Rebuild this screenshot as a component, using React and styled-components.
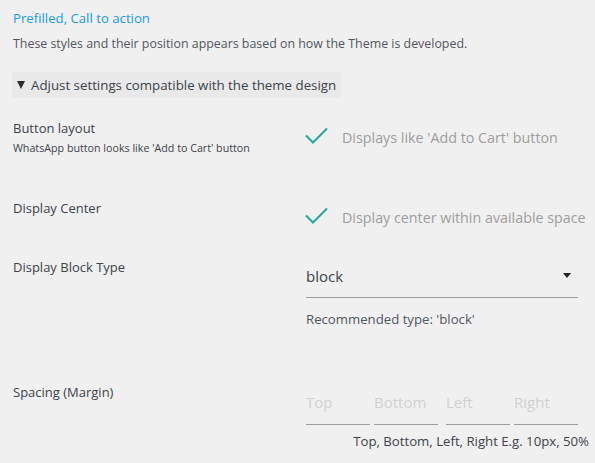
import React from 'react'
import styled, { createGlobalStyle } from 'styled-components'

const Global = createGlobalStyle`
  html, body {
    margin: 0;
    background: #f0f0f0;
  }
  body {
    font-family: "Open Sans", "Noto Sans", sans-serif;
    color: #3c434a;
  }
`

const Check = ({ label }) => {
  return (
    <CheckRow>
      <svg width="26" height="22" viewBox="0 0 26 22">
        <path d="M3 9.5 L10 16.5 L24 2.5" fill="none" stroke="#26a69a" strokeWidth="2" />
      </svg>
      <span>{label}</span>
    </CheckRow>
  )
}

const App = () => {
  const margins = ['Top', 'Bottom', 'Left', 'Right']
  return (
    <Page>
      <Global />
      <Title>Prefilled, Call to action</Title>
      <Desc>These styles and their position appears based on how the Theme is developed.</Desc>

      <Summary>
        <Arrow /> Adjust settings compatible with the theme design
      </Summary>

      <Row $h={80}>
        <div>
          <Label>Button layout</Label>
          <Sub>WhatsApp button looks like 'Add to Cart' button</Sub>
        </div>
        <Check label="Displays like 'Add to Cart' button" />
      </Row>

      <Row $h={59}>
        <Label>Display Center</Label>
        <Check label="Display center within available space" />
      </Row>

      <Row $h={125}>
        <Label>Display Block Type</Label>
        <div>
          <Select>
            <span>block</span>
            <Caret />
          </Select>
          <Hint>Recommended type: 'block'</Hint>
        </div>
      </Row>

      <Row $h={80}>
        <Label>Spacing (Margin)</Label>
        <div>
          <MarginInputs>
            {margins.map((m) => (
              <MarginField key={m} $wide={m === 'Left'}>{m}</MarginField>
            ))}
          </MarginInputs>
          <MarginHint>Top, Bottom, Left, Right E.g. 10px, 50%</MarginHint>
        </div>
      </Row>
    </Page>
  )
}

const Page = styled.div`
  padding: 8px 0 0 13px;
  width: 582px;
  box-sizing: border-box;
`

const Title = styled.div`
  color: #1a9be6;
  font-size: 13.2px;
  line-height: 20px;
`

const Desc = styled.p`
  margin: 6px 0 0;
  font-size: 12.4px;
  line-height: 20px;
  color: #50575e;
`

const Summary = styled.div`
  display: flex;
  align-items: center;
  width: fit-content;
  margin: 18px 0 21px -1px;
  padding: 4px 5px 4px 4px;
  background: #e9e9e9;
  font-size: 13.3px;
  line-height: 18px;
  color: #3c434a;
`

const Arrow = styled.span`
  width: 0;
  height: 0;
  margin: 0 6px 0 1px;
  border-left: 4.5px solid transparent;
  border-right: 4.5px solid transparent;
  border-top: 8px solid #2c2c2c;
`

const Row = styled.div`
  display: grid;
  grid-template-columns: 293px 1fr;
  height: ${(p) => p.$h}px;
`

const Label = styled.div`
  font-size: 13px;
  line-height: 18px;
  color: #3c434a;
`

const Sub = styled.div`
  margin-top: 4px;
  font-size: 10.7px;
  line-height: 14px;
  color: #3c434a;
`

const CheckRow = styled.label`
  display: flex;
  align-items: center;
  margin-top: 6px;
  height: 24px;
  font-size: 14.3px;
  color: #9e9e9e;
  white-space: nowrap;

  svg {
    flex-shrink: 0;
    margin-left: -3px;
    margin-right: 13px;
  }
`

const Select = styled.div`
  display: flex;
  align-items: center;
  justify-content: space-between;
  width: 272px;
  height: 40px;
  padding-bottom: 4px;
  box-sizing: border-box;
  border-bottom: 1px solid #9e9e9e;
  font-size: 15px;
  line-height: 18px;
  color: #3c434a;
`

const Caret = styled.span`
  width: 0;
  height: 0;
  margin-right: 7px;
  border-left: 4.5px solid transparent;
  border-right: 4.5px solid transparent;
  border-top: 5px solid #222;
`

const Hint = styled.div`
  margin-top: 12px;
  font-size: 13.2px;
  color: #50575e;
`

const MarginInputs = styled.div`
  display: flex;
  gap: 4px;
  margin-top: 5px;
`

const MarginField = styled.div`
  width: 64px;
  height: 36px;
  margin-left: ${(p) => (p.$wide ? 4 : 0)}px;
  border-bottom: 1px solid #9e9e9e;
  font-size: 15px;
  line-height: 28px;
  color: #d1d1d1;
`

const MarginHint = styled.div`
  margin-top: 7px;
  width: 283px;
  text-align: right;
  font-size: 13.2px;
  color: #3c434a;
`

export default App
